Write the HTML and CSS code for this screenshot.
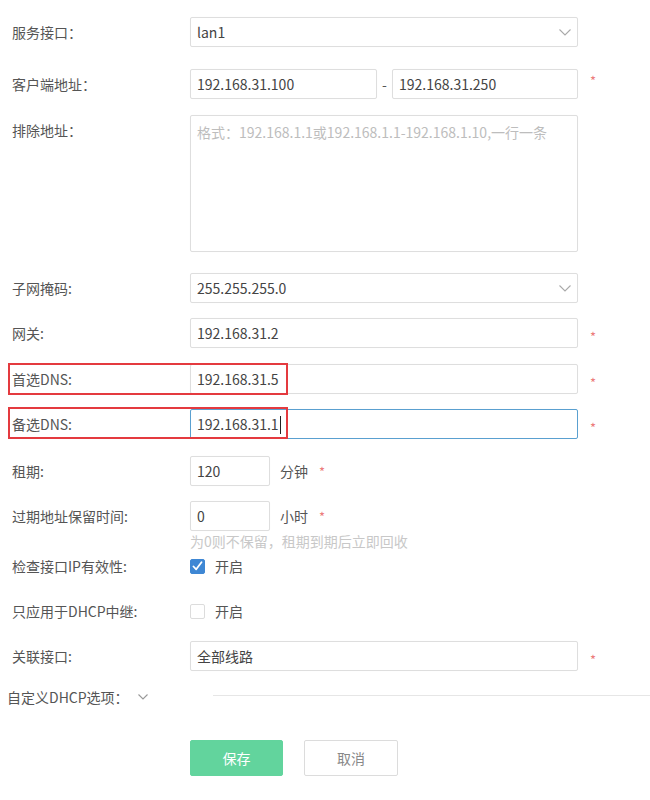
FILE: index.html
```html
<!DOCTYPE html>
<html lang="zh-CN">
<head>
<meta charset="utf-8">
<title>DHCP</title>
<link rel="stylesheet" href="styles.css">
</head>
<body>
<div class="form">
  <div class="row">
    <div class="lbl">服务接口：</div>
    <div class="ctl">
      <div class="box select"><span>lan1</span><svg class="chev" width="12" height="7" viewBox="0 0 12 7"><polyline points="0.5,0.5 6,6 11.5,0.5" fill="none" stroke="#aaa" stroke-width="1.1"/></svg></div>
    </div>
  </div>

  <div class="row mt22">
    <div class="lbl">客户端地址：</div>
    <div class="ctl range">
      <div class="box ip1">192.168.31.100</div>
      <span class="dash">-</span>
      <div class="box ip2">192.168.31.250</div>
    </div>
    <span class="req req-high">*</span>
  </div>

  <div class="row mt16">
    <div class="lbl">排除地址：</div>
    <div class="ctl">
      <div class="box area"><span class="ph">格式：192.168.1.1或192.168.1.1-192.168.1.10,一行一条</span></div>
    </div>
  </div>

  <div class="row mt21">
    <div class="lbl">子网掩码:</div>
    <div class="ctl">
      <div class="box select"><span>255.255.255.0</span><svg class="chev" width="12" height="7" viewBox="0 0 12 7"><polyline points="0.5,0.5 6,6 11.5,0.5" fill="none" stroke="#aaa" stroke-width="1.1"/></svg></div>
    </div>
  </div>

  <div class="row mt15">
    <div class="lbl">网关:</div>
    <div class="ctl"><div class="box">192.168.31.2</div></div>
    <span class="req">*</span>
  </div>

  <div class="row mt16">
    <div class="mark mark1"></div>
    <div class="lbl">首选DNS:</div>
    <div class="ctl"><div class="box">192.168.31.5</div></div>
    <span class="req">*</span>
  </div>

  <div class="row mt15">
    <div class="mark mark2"></div>
    <div class="lbl">备选DNS:</div>
    <div class="ctl"><div class="box focus">192.168.31.1<span class="caret"></span></div></div>
    <span class="req">*</span>
  </div>

  <div class="row mt17">
    <div class="lbl">租期:</div>
    <div class="ctl unitrow">
      <div class="box small">120</div>
      <span class="unit">分钟</span>
      <span class="req req-in">*</span>
    </div>
  </div>

  <div class="row mt15">
    <div class="lbl">过期地址保留时间:</div>
    <div class="ctl">
      <div class="unitrow">
        <div class="box small">0</div>
        <span class="unit">小时</span>
        <span class="req req-in">*</span>
      </div>
      <div class="hint">为0则不保留，租期到期后立即回收</div>
    </div>
  </div>

  <div class="row">
    <div class="lbl">检查接口IP有效性:</div>
    <div class="ctl cbrow">
      <span class="cb on"><svg width="11" height="10" viewBox="0 0 11 10"><polyline points="1.5,5.5 4.2,8.3 9.5,1.2" fill="none" stroke="#fff" stroke-width="1.8" stroke-linecap="round" stroke-linejoin="round"/></svg></span>
      <span class="cblbl">开启</span>
    </div>
  </div>

  <div class="row mt15">
    <div class="lbl">只应用于DHCP中继:</div>
    <div class="ctl cbrow">
      <span class="cb"></span>
      <span class="cblbl">开启</span>
    </div>
  </div>

  <div class="row mt15">
    <div class="lbl">关联接口:</div>
    <div class="ctl"><div class="box">全部线路</div></div>
    <span class="req">*</span>
  </div>

  <div class="custom">
    <div class="custom-lbl">自定义DHCP选项：<svg class="chev2" width="10" height="6" viewBox="0 0 10 6"><polyline points="0.5,0.5 5,5 9.5,0.5" fill="none" stroke="#999" stroke-width="1.1"/></svg></div>
    <div class="custom-line"></div>
  </div>

  <div class="actions">
    <button class="btn save">保存</button>
    <button class="btn cancel">取消</button>
  </div>
</div>
</body>
</html>
```

FILE: styles.css
```css
* { box-sizing: border-box; }
html, body { margin: 0; padding: 0; background: #fff; }
body {
  font-family: "Noto Sans CJK SC", "Noto Sans", sans-serif;
  font-size: 14px;
  color: #555;
}
.form {
  padding-top: 17px;
  width: 650px;
}
.row {
  position: relative;
  display: grid;
  grid-template-columns: 178px 388px auto;
  padding-left: 12px;
  align-items: start;
}
.mt15 { margin-top: 15px; }
.mt16 { margin-top: 16px; }
.mt17 { margin-top: 17px; }
.mt21 { margin-top: 21px; }
.mt22 { margin-top: 22px; }

.lbl {
  line-height: 30px;
  height: 30px;
  color: #555;
  white-space: nowrap;
}
.ctl { min-width: 0; }
.box {
  height: 30px;
  border: 1px solid #dedede;
  border-radius: 2px;
  padding: 0 6px;
  line-height: 28px;
  color: #444;
  background: #fff;
  box-shadow: 0 0 1px rgba(0,0,0,0.04);
  white-space: nowrap;
  overflow: hidden;
}
.select {
  display: flex;
  align-items: center;
  justify-content: space-between;
  padding-right: 6px;
}
.chev { flex: none; }
.range {
  display: flex;
  align-items: center;
}
.ip1 { width: 187px; }
.ip2 { width: 186px; }
.dash {
  width: 15px;
  text-align: center;
  color: #555;
  line-height: 30px;
}
.area {
  height: 137px;
  line-height: 20px;
  padding-top: 6px;
}
.ph { color: #bdbdbd; }
.req {
  color: #ec7b7b;
  font-size: 13px;
  line-height: 18px;
  padding-left: 12px;
  padding-top: 10px;
}
.req-high { padding-top: 3px; }
.focus { border-color: #5aa0d0; }
.caret {
  display: inline-block;
  width: 1px;
  height: 18px;
  background: #222;
  vertical-align: middle;
  margin-left: 1px;
  margin-top: -3px;
}
.unitrow {
  display: flex;
  align-items: flex-start;
}
.small { width: 80px; }
.unit {
  margin-left: 10px;
  line-height: 30px;
  color: #555;
}
.req-in { padding-left: 11px; padding-top: 7px; }
.hint {
  color: #c8c8c8;
  line-height: 20px;
  height: 20px;
  white-space: nowrap;
}
.cbrow {
  display: flex;
  align-items: center;
  height: 30px;
}
.cb {
  width: 15px;
  height: 15px;
  border: 1px solid #dcdcdc;
  border-radius: 2px;
  background: #fff;
  display: inline-flex;
  align-items: center;
  justify-content: center;
  flex: none;
}
.cb.on {
  background: #3e87d4;
  border-color: #3e87d4;
}
.cblbl {
  margin-left: 10px;
  color: #555;
  line-height: 30px;
}
.mark {
  position: absolute;
  left: 8px;
  width: 280px;
  height: 32px;
  border: 2px solid #e43a3f;
  pointer-events: none;
}
.mark1 { top: -1px; }
.mark2 { top: -2px; }

.custom {
  display: grid;
  grid-template-columns: 206px 1fr;
  align-items: center;
  padding-left: 7px;
  margin-top: 11px;
  height: 30px;
}
.custom-lbl {
  color: #555;
  display: flex;
  align-items: center;
  white-space: nowrap;
}
.chev2 { margin-left: 9px; }
.custom-line {
  height: 1px;
  background: #e6e6e6;
  margin-top: -3px;
}
.actions {
  display: flex;
  gap: 21px;
  margin-left: 190px;
  margin-top: 28px;
}
.btn {
  height: 36px;
  border-radius: 2px;
  font-family: inherit;
  font-size: 14px;
  cursor: pointer;
}
.save {
  width: 93px;
  background: #62d49d;
  border: 1px solid #62d49d;
  color: #fff;
}
.cancel {
  width: 94px;
  background: #fff;
  border: 1px solid #dcdcdc;
  color: #888;
}
```
